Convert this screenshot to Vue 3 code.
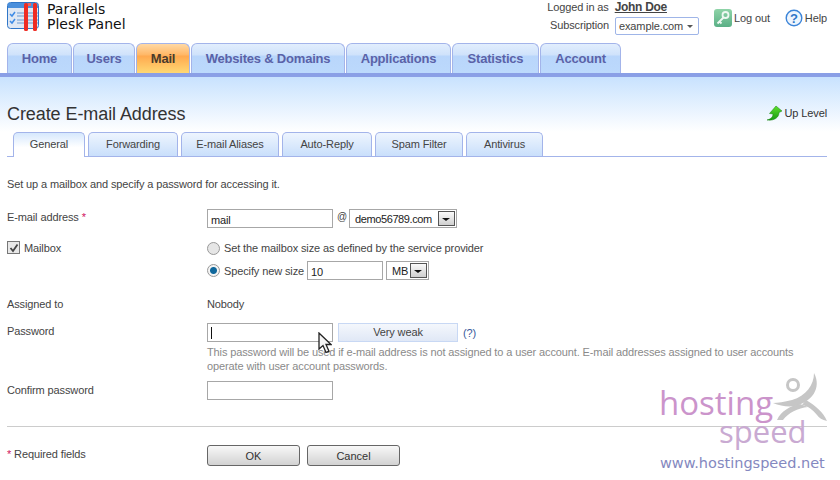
<script setup>
const mainTabs = [
  { label: 'Home', width: 65 },
  { label: 'Users', width: 62 },
  { label: 'Mail', width: 54, active: true },
  { label: 'Websites & Domains', width: 154 },
  { label: 'Applications', width: 105 },
  { label: 'Statistics', width: 87 },
  { label: 'Account', width: 81 },
]
const subTabs = [
  { label: 'General', width: 72, active: true },
  { label: 'Forwarding', width: 90 },
  { label: 'E-mail Aliases', width: 98 },
  { label: 'Auto-Reply', width: 90 },
  { label: 'Spam Filter', width: 88 },
  { label: 'Antivirus', width: 77 },
]
</script>

<template>
  <div class="page">
    <header class="top">
      <div class="brand">
        <svg class="logo" width="32" height="31" viewBox="0 0 32 31">
          <rect x="0.5" y="2.500" width="31" height="26" rx="3" fill="#dfe8f4" stroke="#2f76c8" />
          <path d="M1 3h30v5H1z" fill="#4a8fdc" />
          <path d="M3 14l2 2 3-4M3 21l2 2 3-4" fill="none" stroke="#3d8be6" stroke-width="1.500" />
          <path d="M10 13h21M10 16h21M10 20h21M10 23h21" stroke="#6b9ad2" />
          <rect x="17" y="3" width="4" height="28" rx="1.500" fill="#ee2c24" />
          <rect x="26" y="3" width="4" height="28" rx="1.500" fill="#ee2c24" />
          <rect x="21" y="3" width="3" height="3" fill="#f0635c" />
        </svg>
        <div class="brand-name">Parallels<br />Plesk Panel</div>
      </div>
      <div class="account">
        <div class="who">
          <div>Logged in as <a class="user">John Doe</a></div>
          <div class="subscription">Subscription <span class="sub-select">example.com<i class="caret"></i></span></div>
        </div>
        <a class="top-link logout">
          <svg width="18" height="18" viewBox="0 0 18 18">
            <defs>
              <linearGradient id="keyBg" x1="0" y1="0" x2="0" y2="1">
                <stop offset="0" stop-color="#8fd4a8" />
                <stop offset="1" stop-color="#5aaf86" />
              </linearGradient>
            </defs>
            <rect width="18" height="18" rx="3" fill="url(#keyBg)" />
            <circle cx="11.500" cy="6" r="3" fill="none" stroke="#eef8f2" stroke-width="1.800" />
            <path d="M9.500 8.500L3.500 14.500M5.500 12.500l2 2" stroke="#eef8f2" stroke-width="1.800" fill="none" />
          </svg>
          Log out
        </a>
        <a class="top-link">
          <svg width="18" height="18" viewBox="0 0 18 18">
            <circle cx="9" cy="9" r="7.800" fill="#eef5fd" stroke="#3b84d8" stroke-width="1.400" />
            <text x="9" y="13.500" text-anchor="middle" class="help-q">?</text>
          </svg>
          Help
        </a>
      </div>
    </header>

    <nav class="main-tabs">
      <a v-for="tab in mainTabs" :key="tab.label" class="main-tab" :class="{ active: tab.active }" :style="{ width: tab.width + 'px' }">{{ tab.label }}</a>
    </nav>

    <section class="title-band">
      <h1>Create E-mail Address</h1>
      <a class="up-level">
        <svg width="17" height="16" viewBox="0 0 17 16">
          <defs>
            <linearGradient id="upBg" x1="0" y1="0" x2="0" y2="1">
              <stop offset="0" stop-color="#5fe02c" />
              <stop offset="1" stop-color="#169a10" />
            </linearGradient>
          </defs>
          <path d="M1 15C5 14 7 12 7 9L3.500 8.500 10 1l6 5-3 1.500C13 12 9 16 1 15z" fill="url(#upBg)" stroke="#15800e" stroke-width="0.500" />
        </svg>
        Up Level
      </a>
    </section>

    <nav class="sub-tabs">
      <a v-for="tab in subTabs" :key="tab.label" class="sub-tab" :class="{ active: tab.active }" :style="{ width: tab.width + 'px' }">{{ tab.label }}</a>
    </nav>

    <p class="hint">Set up a mailbox and specify a password for accessing it.</p>

    <form class="form" @submit.prevent>
      <div class="row email-row">
        <label>E-mail address <b class="req">*</b></label>
        <div class="field">
          <span class="input w126">mail</span>
          <span class="at">@</span>
          <span class="select domain">demo56789.com<i class="arrow"></i></span>
        </div>
      </div>

      <div class="row mailbox-row">
        <label class="check-label"><i class="checkbox"><svg width="10" height="10" viewBox="0 0 10 10"><path d="M1.500 5l2.500 3 4.500-6.500" fill="none" stroke="#444" stroke-width="1.800" /></svg></i>Mailbox</label>
        <div class="field column">
          <div class="radio-line"><i class="radio"></i>Set the mailbox size as defined by the service provider</div>
          <div class="radio-line size-line">
            <i class="radio on"></i>Specify new size
            <span class="input w77">10</span>
            <span class="select unit">MB<i class="arrow"></i></span>
          </div>
        </div>
      </div>

      <div class="row assigned-row">
        <label>Assigned to</label>
        <div class="field">Nobody</div>
      </div>

      <div class="row password-row">
        <label>Password</label>
        <div class="field column">
          <div class="pass-line">
            <span class="input w126 typing"><i class="text-caret"></i></span>
            <span class="strength">Very weak</span>
            <a class="what">(?)</a>
          </div>
          <p class="note">This password will be used if e-mail address is not assigned to a user account. E-mail addresses assigned to user accounts operate with user account passwords.</p>
        </div>
      </div>

      <div class="row confirm-row">
        <label>Confirm password</label>
        <div class="field"><span class="input w126"></span></div>
      </div>

      <hr class="divider" />

      <div class="row actions">
        <label class="required-note"><b class="req">*</b> Required fields</label>
        <div class="field">
          <button type="button">OK</button>
          <button type="button">Cancel</button>
        </div>
      </div>
    </form>

    <svg class="cursor" width="14" height="22" viewBox="0 0 14 22">
      <path d="M1 1v16l4-3.500 3 7 3-1.300-3-6.700h5z" fill="#f4f4f4" stroke="#222" stroke-width="1.300" />
    </svg>

    <div class="watermark">
      <svg class="figure" width="60" height="56" viewBox="0 0 60 56">
        <circle cx="23" cy="15" r="5.500" fill="none" stroke="#c6c6c6" stroke-width="3" />
        <path d="M44 3C44 15 36 26 22 30 14 32 8 33 3 33c7 3 15 4 22 3C42 32 52 18 44 3z" fill="#c6c6c6" />
        <path d="M36 30c10 6 17 12 21 21-5-1-8-3-10-6-4-5-9-9-15-10z" fill="#c6c6c6" />
        <path d="M7 50c4-9 13-14 23-16l8 3c-10 1-20 6-25 13z" fill="#c6c6c6" />
      </svg>
      <span class="wm-hosting">hosting</span>
      <span class="wm-speed">speed</span>
      <span class="wm-url">www.hostingspeed.net</span>
    </div>
  </div>
</template>

<style>
html, body {
  margin: 0;
  background: #fff;
}
</style>

<style scoped>
.page {
  position: relative;
  width: 840px;
  height: 480px;
  overflow: hidden;
  background: #fff;
  font-family: "Liberation Sans", sans-serif;
  font-size: 11px;
  letter-spacing: -0.12px;
  color: #444;
  line-height: 14px;
}
.top {
  display: flex;
  justify-content: space-between;
  height: 43px;
}
.brand {
  display: flex;
  gap: 8px;
  padding: 0 0 0 7px;
}
.brand-name {
  font-family: "DejaVu Sans", sans-serif;
  font-size: 14px;
  letter-spacing: 0;
  line-height: 15px;
  color: #111;
  margin-top: 2px;
}
.account {
  display: flex;
  align-items: flex-start;
  padding-right: 13px;
}
.who {
  text-align: right;
  margin-right: 15px;
}
.user {
  font-size: 12px;
  font-weight: bold;
  letter-spacing: -0.3px;
  text-decoration: underline;
  margin-left: 3px;
  margin-right: 32px;
}
.subscription {
  margin-top: 3px;
}
.sub-select {
  box-sizing: border-box;
  display: inline-flex;
  align-items: center;
  justify-content: space-between;
  width: 84px;
  height: 18px;
  padding: 0 3px;
  margin-left: 3px;
  border: 1px solid #9fb5e8;
  border-radius: 2px;
  vertical-align: middle;
}
.caret {
  width: 0;
  height: 0;
  border: 3px solid transparent;
  border-top: 3px solid #555;
  border-bottom: 0;
  margin-right: 2px;
}
.top-link {
  display: inline-flex;
  align-items: center;
  gap: 2px;
  margin-top: 9px;
}
.logout {
  margin-right: 15px;
}
.help-q {
  font: bold 13px "Liberation Sans", sans-serif;
  fill: #2f76c8;
}
.main-tabs {
  display: flex;
  gap: 1px;
  height: 30px;
  padding-left: 7px;
}
.main-tab {
  box-sizing: border-box;
  height: 30px;
  border: 1px solid #a3b4ea;
  border-bottom: 0;
  border-radius: 6px 6px 0 0;
  background: linear-gradient(#e2eefd 0, #cfe2fb 11px, #b9d6fb 12px, #bcd9fc 100%);
  color: #5a62a8;
  font-size: 13px;
  font-weight: bold;
  letter-spacing: -0.2px;
  line-height: 29px;
  text-align: center;
}
.main-tab.active {
  background: linear-gradient(#ffd9a4 0, #ffb766 11px, #ffa94f 12px, #ffd873 100%);
  color: #4a3b2c;
}
.title-band {
  display: flex;
  justify-content: space-between;
  align-items: flex-start;
  height: 55px;
  border-top: 4px solid #8a9fe6;
  background: linear-gradient(#c8e2fe, #fff);
}
.title-band h1 {
  margin: 26px 0 0 7px;
  font: normal 18px/22px "Liberation Sans", sans-serif;
  letter-spacing: -0.08px;
  color: #333;
}
.up-level {
  display: flex;
  align-items: center;
  gap: 2px;
  margin: 28px 13px 0 0;
  color: #333;
}
.sub-tabs {
  display: flex;
  gap: 3px;
  height: 24px;
  margin: 0 13px 0 7px;
  padding-left: 6px;
  border-bottom: 1px solid #a3b4ea;
}
.sub-tab {
  box-sizing: border-box;
  height: 24px;
  border: 1px solid #a3b4ea;
  border-bottom: 0;
  border-radius: 5px 5px 0 0;
  background: linear-gradient(#eef5fe, #c9dffb);
  color: #444;
  line-height: 22px;
  text-align: center;
}
.sub-tab.active {
  height: 25px;
  background: linear-gradient(#d6e8fd, #fff 60%);
}
.hint {
  margin: 20px 0 0 7px;
}
.form {
  margin-top: 18px;
}
.row {
  display: flex;
  padding-left: 7px;
}
.row label {
  flex: 0 0 200px;
}
.email-row label {
  padding-top: 1px;
}
.field {
  display: flex;
  align-items: center;
}
.field.column {
  flex-direction: column;
  align-items: flex-start;
}
.req {
  color: #d0115e;
  font-weight: normal;
}
.input {
  box-sizing: border-box;
  display: inline-block;
  height: 19px;
  padding: 3px 3px 0;
  border: 1px solid #a7a7a7;
  color: #222;
}
.w126 {
  width: 126px;
}
.w77 {
  width: 76px;
  margin-left: 3px;
}
.at {
  margin: -4px 2px 0 4px;
  font-size: 10px;
}
.select {
  box-sizing: border-box;
  display: inline-flex;
  align-items: center;
  justify-content: space-between;
  height: 19px;
  padding: 0 1px 0 5px;
  border: 1px solid #a7a7a7;
  color: #222;
}
.domain {
  width: 108px;
  letter-spacing: -0.4px;
}
.unit {
  width: 43px;
}
.arrow {
  box-sizing: border-box;
  width: 17px;
  height: 15px;
  border: 1px solid #555;
  background: linear-gradient(#fafafa, #cfcfcf);
  position: relative;
}
.arrow::after {
  content: "";
  position: absolute;
  left: 3px;
  top: 6px;
  border: 4px solid transparent;
  border-top: 3px solid #111;
  border-bottom: 0;
}
.mailbox-row {
  margin-top: 13px;
}
.check-label {
  display: flex;
  align-items: flex-start;
  gap: 4px;
}
.checkbox {
  box-sizing: border-box;
  display: flex;
  align-items: center;
  justify-content: center;
  width: 13px;
  height: 13px;
  border: 1px solid #777;
  background: #e8e8e8;
}
.radio-line {
  display: flex;
  align-items: center;
  height: 14px;
}
.size-line {
  height: 19px;
  margin-top: 6px;
}
.size-line .select {
  margin-left: 3px;
}
.radio {
  box-sizing: border-box;
  width: 13px;
  height: 13px;
  margin-right: 4px;
  border: 1px solid #999;
  border-radius: 50%;
  background: #e6e6e6;
}
.radio.on {
  background: radial-gradient(circle, #10689c 0 3px, #f4f4f4 4px);
}
.assigned-row {
  margin-top: 17px;
}
.password-row {
  margin-top: 12px;
}
.password-row label {
  padding-top: 1px;
}
.pass-line {
  display: flex;
  align-items: center;
}
.typing {
  display: flex;
  align-items: center;
  padding: 0 3px;
}
.text-caret {
  width: 1px;
  height: 12px;
  background: #111;
}
.strength {
  box-sizing: border-box;
  width: 120px;
  height: 19px;
  margin-left: 5px;
  border: 1px solid #c8d8f4;
  background: linear-gradient(#f4f7fc, #e0e8f6);
  line-height: 17px;
  text-align: center;
}
.what {
  margin-left: 5px;
  color: #3a5a9c;
}
.note {
  width: 600px;
  margin: 3px 0 0;
  color: #8a8a8a;
}
.confirm-row {
  margin-top: 8px;
}
.confirm-row label {
  padding-top: 2px;
}
.divider {
  height: 1px;
  margin: 26px 13px 0 7px;
  border: 0;
  background: #ccc;
}
.actions {
  margin-top: 18px;
}
.required-note {
  padding-top: 2px;
}
button {
  box-sizing: border-box;
  width: 93px;
  height: 21px;
  margin-right: 7px;
  padding: 0;
  border: 1px solid #666;
  border-radius: 3px;
  background: linear-gradient(#f8f8f8, #d2d2d2);
  font: inherit;
  color: #333;
}
.cursor {
  position: absolute;
  left: 318px;
  top: 332px;
}
.watermark {
  position: absolute;
  left: 655px;
  top: 370px;
  width: 185px;
  height: 110px;
  font-family: "Open Sans", sans-serif;
  letter-spacing: 0;
}
.figure {
  position: absolute;
  left: 115px;
  top: 0;
}
.wm-hosting,
.wm-speed,
.wm-url {
  position: absolute;
  white-space: nowrap;
}
.wm-hosting {
  left: 4px;
  top: 20px;
  font-size: 33px;
  line-height: 26px;
  color: #cb94cb;
}
.wm-speed {
  left: 64px;
  top: 48px;
  font-size: 31px;
  line-height: 26px;
  color: #c9aad2;
}
.wm-url {
  left: 5px;
  top: 84px;
  font-family: "DejaVu Sans", sans-serif;
  font-size: 14.500px;
  line-height: 18px;
  color: #8488c0;
}
</style>
